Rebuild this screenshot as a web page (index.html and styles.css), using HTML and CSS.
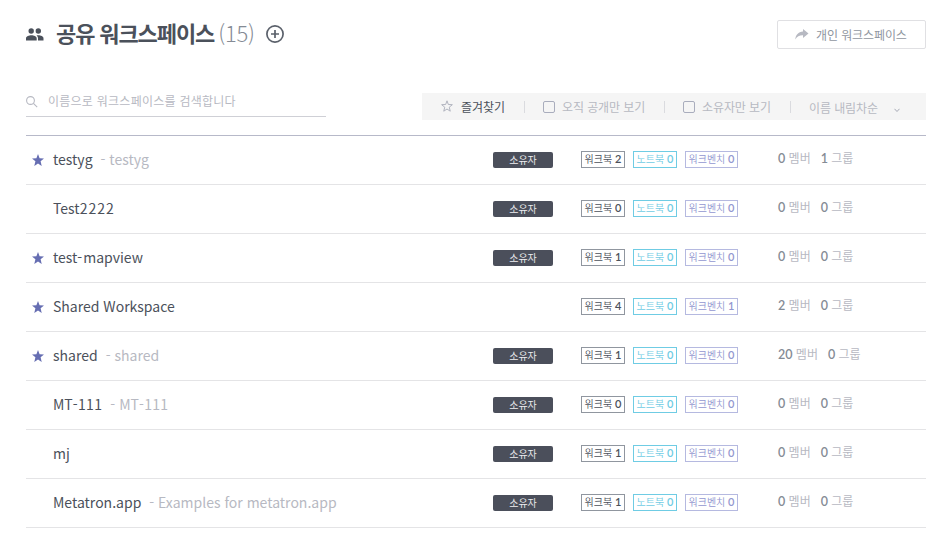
FILE: index.html
```html
<!DOCTYPE html>
<html lang="ko">
<head>
<meta charset="utf-8">
<title>공유 워크스페이스</title>
<link rel="stylesheet" href="styles.css">
</head>
<body>
<svg class="defs" width="0" height="0"><symbol id="star" viewBox="0 0 12 12"><path d="M6 0l1.600 4.200 4.400.3-3.400 2.800L9.700 12 6 9.400 2.300 12l1.100-4.700L0 4.500l4.400-.3z"/></symbol></svg>
<header class="top">
  <svg class="people" width="18" height="13" viewBox="0 0 18 13"><circle cx="5.200" cy="3" r="2.700"/><circle cx="12.300" cy="3" r="2.700"/><path d="M0 12.500V10.400C0 8.200 3 7.300 5.400 7.300s5.300.9 5.300 3.100v2.100zM12 12.500v-2.200c0-1.300-.6-2.200-1.500-2.900.6-.1 1.200-.1 1.800-.1 2.400 0 5.200.9 5.200 3.100v2.100z"/></svg>
  <h1 class="title">공유 워크스페이스</h1><span class="total">(15)</span>
  <svg class="add" width="18" height="18" viewBox="0 0 18 18"><circle cx="9" cy="9" r="8.100"/><path d="M9 5v8M5 9h8"/></svg>
  <a class="personal"><svg width="14" height="11" viewBox="0 0 14 11"><path d="M8 0l5.500 4.500L8 9V6.300C4.500 6.200 2 7.500.3 10.600.6 6 3.300 3 8 2.600z"/></svg><span>개인 워크스페이스</span></a>
</header>
<div class="tools">
  <div class="search"><svg width="12" height="12" viewBox="0 0 12 12"><circle cx="4.500" cy="4.500" r="3.900"/><path d="M7.400 7.400l3.800 3.800"/></svg><span>이름으로 워크스페이스를 검색합니다</span></div>
  <div class="filters">
    <div class="fav"><svg width="12" height="12" viewBox="0 0 12 12"><path d="M6 .8l1.350 3.700 4 .2-3.100 2.500 1 4L6 9l-3.250 2.200 1-4-3.100-2.500 4-.2z"/></svg><span>즐겨찾기</span></div>
    <i class="bar"></i>
    <div class="check"><i class="box"></i><span>오직 공개만 보기</span></div>
    <i class="bar"></i>
    <div class="check"><i class="box"></i><span>소유자만 보기</span></div>
    <i class="bar"></i>
    <div class="sort"><span>이름 내림차순</span><svg width="6" height="5" viewBox="0 0 6 5"><path d="M.5.8L3 3.500 5.500.8"/></svg></div>
  </div>
</div>
<main class="list">
  <div class="row"><svg class="star"><use href="#star"/></svg><div class="name">testyg<span>- testyg</span></div><div class="role"><b>소유자</b></div><div class="tags"><span class="tag book">워크북 <b>2</b></span><span class="tag note">노트북 <b>0</b></span><span class="tag bench">워크벤치 <b>0</b></span></div><div class="people-count"><span><b>0</b> 멤버</span><span><b>1</b> 그룹</span></div></div>
  <div class="row"><i class="star"></i><div class="name">Test<em>2222</em></div><div class="role"><b>소유자</b></div><div class="tags"><span class="tag book">워크북 <b>0</b></span><span class="tag note">노트북 <b>0</b></span><span class="tag bench">워크벤치 <b>0</b></span></div><div class="people-count"><span><b>0</b> 멤버</span><span><b>0</b> 그룹</span></div></div>
  <div class="row"><svg class="star"><use href="#star"/></svg><div class="name">test<em>-</em>mapview</div><div class="role"><b>소유자</b></div><div class="tags"><span class="tag book">워크북 <b>1</b></span><span class="tag note">노트북 <b>0</b></span><span class="tag bench">워크벤치 <b>0</b></span></div><div class="people-count"><span><b>0</b> 멤버</span><span><b>0</b> 그룹</span></div></div>
  <div class="row"><svg class="star"><use href="#star"/></svg><div class="name">Shared Workspace</div><div class="role"></div><div class="tags"><span class="tag book">워크북 <b>4</b></span><span class="tag note">노트북 <b>0</b></span><span class="tag bench">워크벤치 <b>1</b></span></div><div class="people-count"><span><b>2</b> 멤버</span><span><b>0</b> 그룹</span></div></div>
  <div class="row"><svg class="star"><use href="#star"/></svg><div class="name">shared<span>- shared</span></div><div class="role"><b>소유자</b></div><div class="tags"><span class="tag book">워크북 <b>1</b></span><span class="tag note">노트북 <b>0</b></span><span class="tag bench">워크벤치 <b>0</b></span></div><div class="people-count"><span><b>20</b> 멤버</span><span><b>0</b> 그룹</span></div></div>
  <div class="row"><i class="star"></i><div class="name">MT<em class="code">-111</em><span>- MT<em class="code">-111</em></span></div><div class="role"><b>소유자</b></div><div class="tags"><span class="tag book">워크북 <b>0</b></span><span class="tag note">노트북 <b>0</b></span><span class="tag bench">워크벤치 <b>0</b></span></div><div class="people-count"><span><b>0</b> 멤버</span><span><b>0</b> 그룹</span></div></div>
  <div class="row"><i class="star"></i><div class="name">mj</div><div class="role"><b>소유자</b></div><div class="tags"><span class="tag book">워크북 <b>1</b></span><span class="tag note">노트북 <b>0</b></span><span class="tag bench">워크벤치 <b>0</b></span></div><div class="people-count"><span><b>0</b> 멤버</span><span><b>0</b> 그룹</span></div></div>
  <div class="row"><i class="star"></i><div class="name">Metatron.app<span>- Examples for metatron.app</span></div><div class="role"><b>소유자</b></div><div class="tags"><span class="tag book">워크북 <b>1</b></span><span class="tag note">노트북 <b>0</b></span><span class="tag bench">워크벤치 <b>0</b></span></div><div class="people-count"><span><b>0</b> 멤버</span><span><b>0</b> 그룹</span></div></div>
</main>
</body>
</html>
```
FILE: styles.css
```css
* { box-sizing: border-box; }
body { margin: 0; padding: 20px 18px 0 26px; background: #fff; color: #4b515b; font-family: "Noto Sans CJK KR", sans-serif; font-size: 12px; white-space: nowrap; overflow: hidden; }
i, em { font-style: normal; }
.defs { position: absolute; }
.top { display: flex; align-items: center; height: 29px; }
.people { fill: #4b515b; margin-right: 12px; }
.title { margin: 0 0 5px; font-size: 22px; line-height: 28px; font-weight: 700; letter-spacing: -1.1px; }
.total { margin: 0 0 5px 4px; font-size: 22px; line-height: 28px; font-weight: 300; letter-spacing: -0.2px; color: #858b95; }
.add { margin: -1px 0 0 11px; fill: none; stroke: #5b616b; stroke-width: 1.7; }
.personal { display: flex; align-items: center; width: 149px; height: 29px; margin-left: auto; padding-left: 17px; border: 1px solid #e0e0e3; border-radius: 2px; color: #90969f; }
.personal span { margin-bottom: 1px; letter-spacing: -0.1px; }
.personal svg { margin-right: 7px; fill: #b7b9c2; }
.tools { display: flex; justify-content: space-between; margin-top: 37px; height: 50px; border-bottom: 1px solid #b7b9c9; }
.search { display: flex; align-items: center; width: 300px; height: 31px; border-bottom: 1px solid #cfd0d6; color: #b7b9c2; }
.search svg { margin: 2px 10px 0 0; fill: none; stroke: #b7b9c2; stroke-width: 1.1; }
.search span { margin-bottom: 2px; letter-spacing: 0.25px; }
.filters { display: flex; align-items: center; width: 504px; height: 27px; margin-top: 7px; padding-left: 19px; background: #f5f5f5; color: #b7b9c2; }
.fav, .check, .sort { display: flex; align-items: center; }
.fav { width: 83px; color: #4b515b; }
.fav svg { margin: -2px 8px 0 0; fill: none; stroke: #b0b3be; }
.bar { width: 1px; height: 12px; background: #dadbdf; margin-right: 18px; }
.check { width: 121px; letter-spacing: -0.1px; }
.check + .bar + .check { width: 107px; }
.box { width: 12px; height: 12px; margin-right: 7px; border: 1px solid #a9adbd; border-radius: 2px; }
.sort { padding-top: 1px; letter-spacing: -0.1px; }
.sort svg { margin: 7px 0 0 16px; fill: none; stroke: #a5a9b5; }
.row { display: grid; grid-template-columns: 27px 440px 88px 197px 1fr; align-items: center; height: 49px; border-bottom: 1px solid #e4e4e6; }
.star { display: block; width: 12px; height: 12px; margin-left: 6px; fill: #666eb2; }
.name { margin-bottom: 2px; font-size: 14px; line-height: 20px; }
.name span { margin-left: 8px; color: #b7b9c2; }
.name em { letter-spacing: 1px; }
.name .code { letter-spacing: 0.35px; }
.role b { display: block; width: 60px; height: 16px; border-radius: 2px; background: #4b4f5b; color: #f0f0f2; font-size: 10px; line-height: 16px; font-weight: 350; text-align: center; }
.tags { display: flex; gap: 8px; margin-bottom: 1px; }
.tag { width: 44px; height: 17px; border: 1px solid; font-size: 10px; line-height: 14px; font-weight: 350; text-align: center; }
.tag b { font-family: Lato, sans-serif; font-size: 11px; font-weight: 600; line-height: 1; }
.book { border-color: #90969f; color: #4b515b; }
.note { border-color: #6fcce4; color: #6fcce4; }
.bench { width: 53px; border-color: #b5b9e0; color: #9297d0; }
.people-count { display: flex; gap: 10px; margin-bottom: 5px; color: #b7b9c2; }
.people-count b { font-family: Lato, sans-serif; font-size: 12.5px; font-weight: 600; line-height: 1; color: #858b95; }
```
